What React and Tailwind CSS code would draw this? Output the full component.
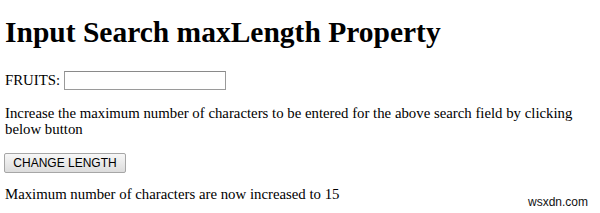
export default function App() {
  return (
    <div className="relative w-[600px] h-[213px] bg-white text-black px-[5px] font-['Liberation_Serif',serif] overflow-hidden">
      <h1 className="pt-[16px] text-[29.5px] leading-[32px] font-bold">Input Search maxLength Property</h1>

      <div className="flex items-start mt-[23px]">
        <span className="text-[14.8px] leading-[19px]">FRUITS:</span>
        <input
          type="search"
          maxLength={5}
          className="ml-[4px] w-[162px] h-[19px] border border-[#9a9a9a] border-t-[#8a8a8a] bg-white outline-none"
        />
      </div>

      <p className="mt-[15px] text-[14.8px] leading-[16px]">
        Increase the maximum number of characters to be entered for the above search field by clicking below button
      </p>

      <button className="mt-[16px] -ml-[1px] w-[122px] h-[20px] border border-[#a6a6a6] rounded-[2px] bg-gradient-to-b from-[#f7f7f7] to-[#dcdcdc] text-[12px] leading-[18px] font-['Liberation_Sans',sans-serif] text-black">
        CHANGE LENGTH
      </button>

      <p className="mt-[12px] text-[14.8px] leading-[16px]">
        Maximum number of characters are now increased to 15
      </p>

      <span className="absolute right-[12px] bottom-[2px] text-[12px] text-[#111] font-['Liberation_Sans',sans-serif]">wsxdn.com</span>
    </div>
  );
}
